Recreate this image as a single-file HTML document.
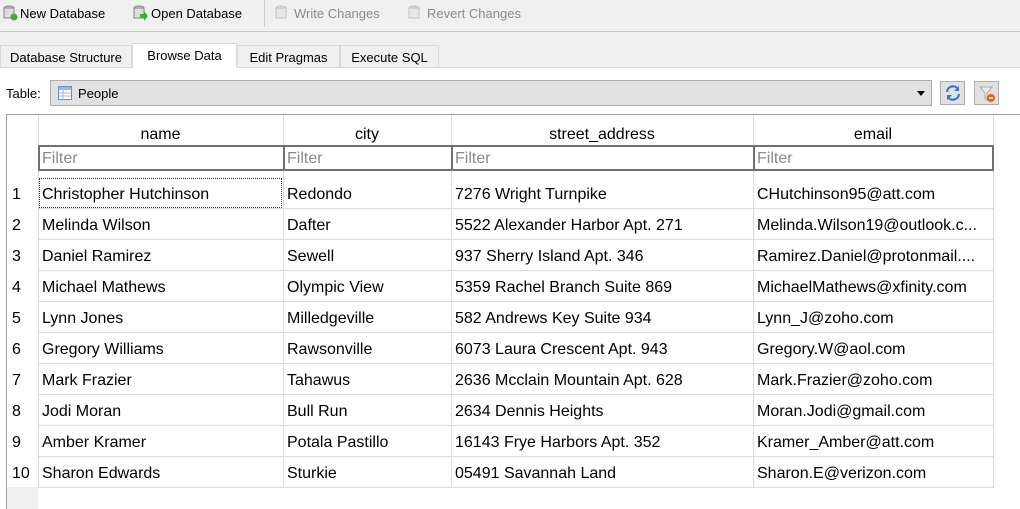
<!DOCTYPE html>
<html><head><meta charset="utf-8"><style>
*{box-sizing:border-box;margin:0;padding:0}
body{width:1020px;height:509px;background:#f0f0f0;font-family:"Liberation Sans","DejaVu Sans",sans-serif;position:relative;overflow:hidden;color:#000}
.a{position:absolute;white-space:nowrap}
.tb{font-size:13px;top:6px}
.dis{color:#8a8a8a}
.tab{position:absolute;top:45px;height:22px;font-size:13px;padding-top:4px;text-align:center;border:1px solid #d9d9d9;border-bottom:none;background:#f0f0f0}
.grid{position:absolute;left:6px;top:114px;width:1014px;height:395px;background:#fff;border-left:1px solid #a0a0a0;border-top:1px solid #a0a0a0}
.c{position:absolute;font-size:16px;white-space:nowrap;overflow:hidden}
.vl{position:absolute;width:1px;background:#dcdcdc}
.hl{position:absolute;height:1px;background:#dcdcdc}
.f{position:absolute;top:145px;height:26px;border:2px solid #707070;border-right:none;background:#fff;color:#8a8a8a;font-size:16px;padding:3px 0 0 2px}
</style></head><body>
<svg class="a" style="left:2px;top:5px" width="16" height="16"><ellipse cx="7" cy="3" rx="5" ry="2" fill="#ccc" stroke="#888"/><rect x="2" y="3" width="10" height="10" fill="#ddd" stroke="#888"/><circle cx="12" cy="12" r="3.5" fill="#4a4"/></svg>
<div class="a tb" style="left:20px">New Database</div>
<svg class="a" style="left:132px;top:5px" width="16" height="16"><ellipse cx="7" cy="3" rx="5" ry="2" fill="#ccc" stroke="#888"/><rect x="2" y="3" width="10" height="10" fill="#ddd" stroke="#888"/><path d="M8 9h4v-3l4 5-4 5v-3H8z" fill="#4a4"/></svg>
<div class="a tb" style="left:151px">Open Database</div>
<div class="a" style="left:264px;top:0;width:1px;height:27px;background:#d0d0d0"></div>
<svg class="a" style="left:274px;top:5px" width="16" height="16" opacity=".45"><ellipse cx="7" cy="3" rx="5" ry="2" fill="#ccc" stroke="#888"/><rect x="2" y="3" width="10" height="10" fill="#ddd" stroke="#888"/></svg>
<div class="a tb dis" style="left:294px">Write Changes</div>
<svg class="a" style="left:407px;top:5px" width="16" height="16" opacity=".45"><ellipse cx="7" cy="3" rx="5" ry="2" fill="#ccc" stroke="#888"/><rect x="2" y="3" width="10" height="10" fill="#ddd" stroke="#888"/></svg>
<div class="a tb dis" style="left:427px">Revert Changes</div>
<div class="a" style="left:0;top:31px;width:1020px;height:1px;background:#c8c8c8"></div>
<div class="a" style="left:0;top:67px;width:1020px;height:1px;background:#d9d9d9"></div>
<div class="tab" style="left:0;width:132px">Database Structure</div>
<div class="tab" style="left:132px;width:105px;top:43px;height:25px;background:#fff">Browse Data</div>
<div class="tab" style="left:237px;width:103px">Edit Pragmas</div>
<div class="tab" style="left:340px;width:99px">Execute SQL</div>
<div class="a" style="left:0;top:68px;width:1020px;height:441px;background:#fff"></div>
<div class="a" style="left:6px;top:86px;font-size:13px">Table:</div>
<div class="a" style="left:50px;top:80px;width:882px;height:26px;background:#e1e1e1;border:1px solid #adadad"></div>
<svg class="a" style="left:58px;top:86px" width="14" height="14"><rect x=".5" y=".5" width="13" height="13" fill="#fff" stroke="#6a8fc0"/><rect x="1" y="1" width="12" height="3" fill="#9bb8e0"/><path d="M1 7h12M1 10h12M5 4v10" stroke="#9bb8e0"/></svg>
<div class="a" style="left:78px;top:86px;font-size:13px">People</div>
<div class="a" style="left:917px;top:91px;border:4px solid transparent;border-top:5px solid #000"></div>
<div class="a" style="left:940px;top:81px;width:25px;height:24px;background:#e1e1e1;border:1px solid #adadad"></div>
<svg class="a" style="left:944px;top:84px" width="18" height="18"><path d="M3 8a6 6 0 0 1 11-3M15 10a6 6 0 0 1-11 3" fill="none" stroke="#3a78c8" stroke-width="2.2"/><path d="M15 2v5h-5zM3 16v-5h5z" fill="#3a78c8"/></svg>
<div class="a" style="left:974px;top:81px;width:25px;height:24px;background:#e1e1e1;border:1px solid #adadad"></div>
<svg class="a" style="left:978px;top:85px" width="18" height="18"><path d="M2 2h12l-5 6v7l-2-2V8z" fill="#eee" stroke="#aaa"/><circle cx="13" cy="13" r="4" fill="#e8601c"/><path d="M11 13h4" stroke="#fff" stroke-width="1.5"/></svg>
<div class="grid"></div>
<div class="a" style="left:6px;top:487px;width:32px;height:22px;background:#f0f0f0;border-left:1px solid #a0a0a0"></div>
<div class="vl" style="left:38px;top:115px;height:372px"></div>
<div class="vl" style="left:283px;top:115px;height:372px"></div>
<div class="vl" style="left:451px;top:115px;height:372px"></div>
<div class="vl" style="left:753px;top:115px;height:372px"></div>
<div class="vl" style="left:993px;top:115px;height:372px"></div>
<div class="c" style="left:38px;width:245px;top:126px;text-align:center">name</div>
<div class="c" style="left:283px;width:168px;top:126px;text-align:center">city</div>
<div class="c" style="left:451px;width:302px;top:126px;text-align:center">street_address</div>
<div class="c" style="left:753px;width:240px;top:126px;text-align:center">email</div>
<div class="f" style="left:38px;width:246px">Filter</div>
<div class="f" style="left:283px;width:169px">Filter</div>
<div class="f" style="left:451px;width:303px">Filter</div>
<div class="f" style="left:753px;width:241px;border-right:2px solid #707070">Filter</div>
<div class="a" style="left:39px;top:178px;width:243px;height:30px;border:1px dotted #333"></div>
<div id="rows"></div>
<script>
var d=[["Christopher Hutchinson","Redondo","7276 Wright Turnpike","CHutchinson95@att.com"],["Melinda Wilson","Dafter","5522 Alexander Harbor Apt. 271","Melinda.Wilson19@outlook.c..."],["Daniel Ramirez","Sewell","937 Sherry Island Apt. 346","Ramirez.Daniel@protonmail...."],["Michael Mathews","Olympic View","5359 Rachel Branch Suite 869","MichaelMathews@xfinity.com"],["Lynn Jones","Milledgeville","582 Andrews Key Suite 934","Lynn_J@zoho.com"],["Gregory Williams","Rawsonville","6073 Laura Crescent Apt. 943","Gregory.W@aol.com"],["Mark Frazier","Tahawus","2636 Mcclain Mountain Apt. 628","Mark.Frazier@zoho.com"],["Jodi Moran","Bull Run","2634 Dennis Heights","Moran.Jodi@gmail.com"],["Amber Kramer","Potala Pastillo","16143 Frye Harbors Apt. 352","Kramer_Amber@att.com"],["Sharon Edwards","Sturkie","05491 Savannah Land","Sharon.E@verizon.com"]];
var x=[42,287,455,757],w=[240,162,296,234],h="";
d.forEach(function(r,i){var t=178+i*31;h+='<div class="c" style="left:12px;top:'+(t+8)+'px">'+(i+1)+'</div>';
r.forEach(function(v,j){h+='<div class="c" style="left:'+x[j]+'px;width:'+w[j]+'px;top:'+(t+8)+'px">'+v+'</div>'});
h+='<div class="hl" style="left:38px;width:956px;top:'+(t+30)+'px"></div>';});
document.getElementById("rows").innerHTML=h;
</script>
</body></html>
